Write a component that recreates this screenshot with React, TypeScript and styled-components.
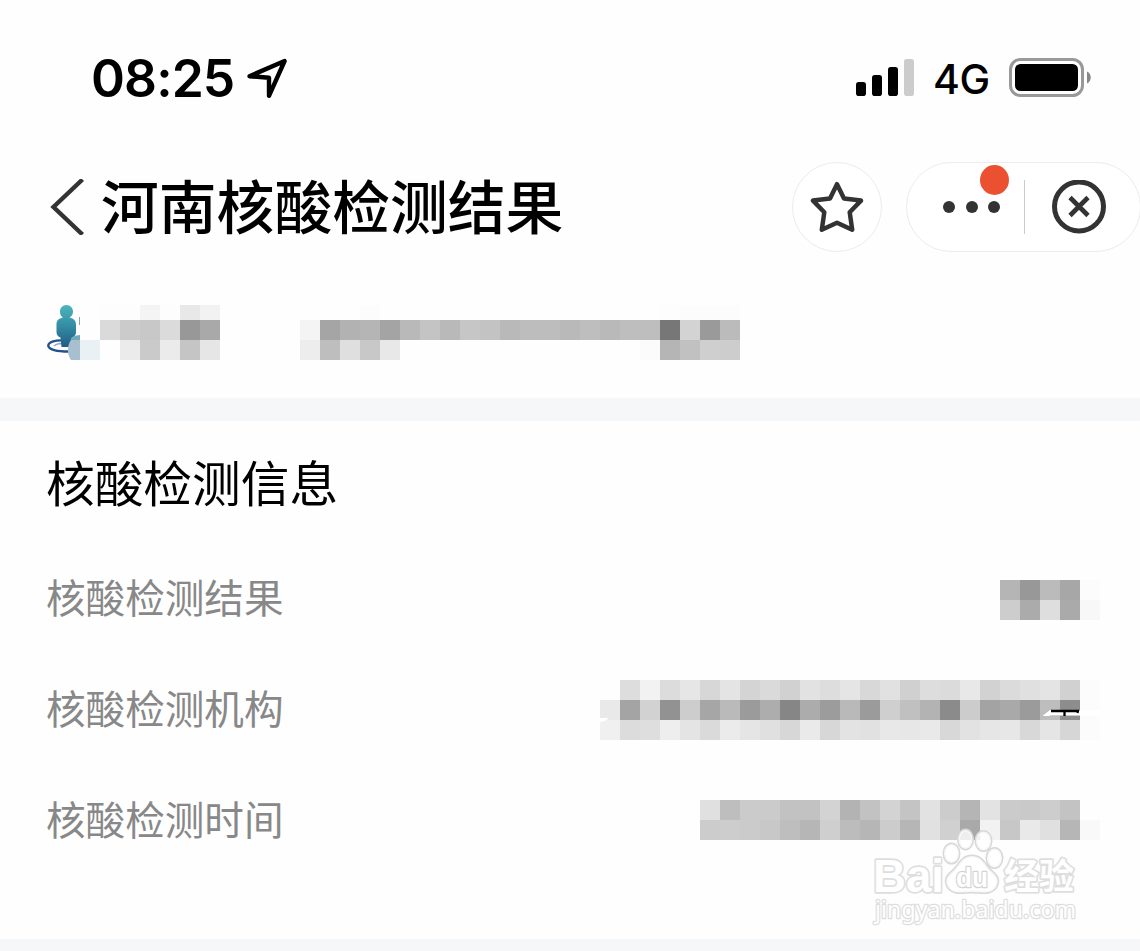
import React from 'react';
import styled, { createGlobalStyle } from 'styled-components';

const GlobalStyle = createGlobalStyle`
  * {
    box-sizing: border-box;
  }
  body {
    margin: 0;
    background: #fefefe;
    font-family: 'Noto Sans CJK SC', sans-serif;
    color: #000;
    overflow: hidden;
  }
`;

const StyledScreen = styled.main`
  position: relative;
  display: flex;
  flex-direction: column;
  width: 1140px;
  height: 951px;
  overflow: hidden;
`;

const StyledStatusBar = styled.header`
  display: flex;
  align-items: center;
  flex: 0 0 156px;
  padding: 0 49px 1px 91px;
  font-family: Inter, 'Liberation Sans', sans-serif;
`;

const StyledTime = styled.span`
  width: 156px;
  font-size: 51.5px;
  font-weight: 600;
  line-height: 60px;
  letter-spacing: -0.9px;
  white-space: nowrap;
`;

const StyledStatusIcons = styled.div`
  display: flex;
  align-items: center;
  margin-left: auto;
`;

const StyledNetwork = styled.span`
  width: 76px;
  margin-right: 18px;
  padding: 2px 0 0 18px;
  font-size: 41px;
  font-weight: 500;
  line-height: 50px;
  letter-spacing: -0.5px;
`;

const StyledNav = styled.nav`
  display: flex;
  align-items: center;
  flex: 0 0 102px;
  padding-left: 50px;
`;

const StyledTitle = styled.h1`
  margin: 0 0 0 16px;
  padding-bottom: 7px;
  font-size: 57.8px;
  font-weight: 500;
  line-height: 84px;
  white-space: nowrap;
`;

const StyledRoundButton = styled.button`
  display: flex;
  justify-content: center;
  align-items: center;
  width: 90px;
  height: 90px;
  margin-left: auto;
  padding: 0;
  border: 1px solid #ececec;
  border-radius: 50%;
  background: #fff;
`;

const StyledCapsule = styled.div`
  display: flex;
  align-items: center;
  width: 235px;
  height: 90px;
  margin: 0 -1px 0 24px;
  padding-left: 36px;
  border: 1px solid #ececec;
  border-radius: 45px;
  background: #fff;
`;

const StyledMore = styled.div`
  position: relative;
  display: flex;
  gap: 10.5px;
  width: 81px;
`;

const StyledDot = styled.i`
  width: 12px;
  height: 12px;
  border-radius: 50%;
  background: #333;
`;

const StyledBadge = styled.i`
  position: absolute;
  top: -36px;
  left: 37px;
  width: 29px;
  height: 30px;
  border-radius: 50%;
  background: #eb5131;
`;

const StyledSeparator = styled.i`
  width: 1px;
  height: 54px;
  margin-right: 27px;
  background: #ccc;
`;

const StyledPatient = styled.section`
  display: flex;
  align-items: flex-start;
  flex: 0 0 140px;
  padding: 47px 0 0 47px;
`;

const StyledPatientId = styled.div`
  margin-left: 80px;
`;

const StyledBand = styled.div`
  flex: 0 0 23px;
  background: #f6f7f9;
`;

const StyledSection = styled.section`
  flex: 0 0 518px;
  padding: 0 40px 0 46px;
`;

const StyledSectionTitle = styled.h2`
  margin: 0;
  padding-top: 24px;
  height: 123px;
  font-size: 48.7px;
  font-weight: 400;
  line-height: 72px;
`;

const StyledRow = styled.div`
  display: flex;
  justify-content: space-between;
  align-items: flex-start;
  height: 111px;
`;

const StyledLabel = styled.span`
  padding-top: 22px;
  color: #888;
  font-size: 39.6px;
  line-height: 59px;
`;

const StyledMosaic = styled.div<{ $columns: number; $first: number }>`
  display: grid;
  grid-template-columns: repeat(${({ $columns }) => $columns}, 20px);
  grid-template-rows: ${({ $first }) => $first}px;
  grid-auto-rows: 20px;
`;

const StyledCell = styled.i<{ $color: string }>`
  background: ${({ $color }) => $color};
`;

const StyledMasked = styled.div<{ $top: number }>`
  position: relative;
  margin-top: ${({ $top }) => $top}px;
`;

const StyledStroke = styled.svg`
  position: absolute;
  top: 28px;
  left: 0;
`;

const StyledWatermark = styled.svg`
  position: absolute;
  left: 860px;
  top: 820px;
`;

interface IMosaic {
  rows: string[];
  first?: number;
}

/**
 * Blocks of censored text, one hex grey level per cell.
 */
const Mosaic = ({ rows, first = 20 }: IMosaic) => {
  const cells = rows.map((r) => r.split(' '));
  return (
    <StyledMosaic $columns={cells[0].length} $first={first}>
      {cells.flat().map((c, i) => (
        <StyledCell key={i} $color={c.length === 2 ? `#${c}${c}${c}` : `#${c}`} />
      ))}
    </StyledMosaic>
  );
};

const nameRows = [
  'fe fd fd f4 fd e8 f2',
  'fe da cb c8 db 98 a9',
  'e9f1f4 fe eb ca eb c5 e6',
];

const idRows = [
  'fe fe fe fc fe fe fe fe fe fe fe fe fe fe fe fe fe fe fd fc fc fc',
  'f4 a5 b2 b5 a4 b9 c4 b9 c6 c3 b9 bd bd b9 be b9 be be 77 d3 9a bb',
  'ed be df c8 e8 fe fe fe fe fe fe fe fe fe fe fe fe fb b5 c1 cf cd',
];

const resultRows = ['b5 98 bb a7 fc', 'cd ab de aa f8'];

const organisationRows = [
  'fe dd f2 dc e6 d7 e4 d4 da d1 e2 dd e5 d8 e1 d0 dd db e8 d2 db e0 e4 d1 fc',
  'e9 a4 d2 92 cd a6 ba 9b ad 86 ac 9c b9 9b cf c0 b3 8b cc a3 a9 9b bd 8d fc',
  'f0 dc de ee e4 da eb e5 e0 d7 ea d7 e3 e1 e8 e7 e9 d8 e2 e6 e7 d8 e5 d6 fc',
];

const timeRows = [
  'e0 be cb cb c2 c2 d3 b3 c2 d3 c4 e2 cc b5 e3 cb c9 cd c3 fe',
  'cc cd cb c8 be b6 cf bc b6 cc b6 e1 d0 a9 f2 c7 e9 e0 b6 f9',
];

const LocationIcon = () => (
  <svg width="42" height="42" viewBox="0 0 42 42">
    <path
      d="M2.5 19.2 37.6 4 22 38.8V20.8Z"
      fill="none"
      stroke="#000"
      strokeWidth="4.4"
      strokeLinejoin="round"
    />
  </svg>
);

const SignalIcon = () => (
  <svg width="59" height="38" viewBox="0 0 59 38">
    <rect x="0" y="23" width="10" height="14" rx="2.8" />
    <rect x="16" y="16" width="10" height="21" rx="2.8" />
    <rect x="32" y="8" width="10" height="29" rx="2.8" />
    <rect x="48" y="0" width="10" height="37" rx="2.8" fill="#ccc" />
  </svg>
);

const BatteryIcon = () => (
  <svg width="82" height="40" viewBox="0 0 82 40">
    <rect
      x="1.5"
      y="1.5"
      width="72"
      height="36"
      rx="10"
      fill="#fff"
      stroke="#999"
      strokeWidth="3"
    />
    <rect x="6" y="6" width="63" height="27" rx="5.5" />
    <path d="M78 13.5c5 2 5 10 0 12Z" fill="#888" />
  </svg>
);

const BackIcon = () => (
  <svg width="35" height="56" viewBox="0 0 35 56">
    <path d="M32.500 .5 3.500 28 32.500 55.500" fill="none" stroke="#333" strokeWidth="4.4" />
  </svg>
);

const StarIcon = () => (
  <svg width="54" height="54" viewBox="0 0 54 54">
    <path
      d="M27 4.2 34 18.4 51 20.6 39.7 32.3 42.2 49.7 27 42.7 11.8 49.7 14.3 32.3 3 20.6 20 18.4Z"
      fill="none"
      stroke="#333"
      strokeWidth="4.5"
      strokeLinejoin="round"
    />
  </svg>
);

const CloseIcon = () => (
  <svg width="54" height="54" viewBox="0 0 54 54">
    <g fill="none" stroke="#333">
      <circle cx="27" cy="26.500" r="24.500" strokeWidth="5" />
      <path d="m18 17.500 18 18M36 17.500 18 35.500" strokeWidth="4.6" />
    </g>
  </svg>
);

const PersonIcon = () => (
  <svg width="33" height="55" viewBox="0 0 33 55">
    <defs>
      <linearGradient id="person" x1="0" y1="0" x2="0" y2="1">
        <stop offset="0" stopColor="#4db5bc" />
        <stop offset=".5" stopColor="#338da3" />
        <stop offset="1" stopColor="#225b86" />
      </linearGradient>
    </defs>
    <path
      d="M21 36C9 34 0 37 1.500 41.500c1.500 3.500 9 5 20 5"
      fill="none"
      stroke="#24518a"
      strokeWidth="2.4"
    />
    <path d="M7 41c3-3 7-3 15-2" fill="none" stroke="#8fa8c8" strokeWidth="1.5" />
    <path
      d="M19.500 0c4 0 6.500 3 6.500 6.500 0 3-1.500 5-3.500 6 4.500 1 6.500 3 6.500 7.500V27c0 3-1.500 4.500-4 5.500l-1 9.500h-9.500l-1-9.500C11 31.500 9.500 30 9.500 27v-7.500c0-4 2-6 6.500-7-2-1-3-3-3-6C13 3 15.500 0 19.500 0Z"
      fill="url(#person)"
    />
    <path d="M24 33q4-3 9-3v5h-9Z" fill="#73a8b9" />
    <path d="M33 35h-9q-3 4-3 10t3 10h9Z" fill="#a7bfcf" />
    <path d="M32.500 12v8" stroke="#7fa9b8" />
  </svg>
);

const Watermark = () => (
  <StyledWatermark width="230" height="115" viewBox="0 0 230 115">
    <g
      fill="#fff"
      stroke="#dedede"
      strokeWidth="3.4"
      paintOrder="stroke"
      strokeLinejoin="round"
    >
      <g fillOpacity=".8" strokeWidth="3" stroke="#d8d8d8">
        <ellipse cx="91.500" cy="33.500" rx="7.500" ry="9.500" />
        <ellipse cx="105.500" cy="19.500" rx="7" ry="9.500" />
        <ellipse cx="123.500" cy="21" rx="7.500" ry="9.500" />
        <ellipse cx="134.500" cy="38" rx="7.500" ry="9.500" />
        <path d="M112 36c10 0 13 9 18 14 7 6 10 10 6 17-5 8-15 5-24 5s-19 3-24-5c-4-7-1-11 6-17 5-5 8-14 18-14Z" />
      </g>
      <g fontFamily="'Liberation Sans', Arial, sans-serif" fontWeight="700">
        <text x="13" y="72" fontSize="47" textLength="71" lengthAdjust="spacingAndGlyphs">
          Bai
        </text>
        <text
          x="96"
          y="67"
          fontSize="28"
          stroke="#d4d4d4"
          strokeWidth="2.600"
          textLength="32"
          lengthAdjust="spacingAndGlyphs"
        >
          du
        </text>
      </g>
      <text
        x="144"
        y="69"
        fontSize="35"
        fontWeight="700"
        fontFamily="'Noto Sans CJK SC', sans-serif"
      >
        经验
      </text>
      <text
        x="15"
        y="98"
        fontSize="23"
        strokeWidth="2.600"
        fontFamily="'Noto Sans', sans-serif"
        textLength="201"
      >
        jingyan.baidu.com
      </text>
    </g>
  </StyledWatermark>
);

const App = () => (
  <>
    <GlobalStyle />
    <StyledScreen>
      <StyledStatusBar>
        <StyledTime>08:25</StyledTime>
        <LocationIcon />
        <StyledStatusIcons>
          <SignalIcon />
          <StyledNetwork>4G</StyledNetwork>
          <BatteryIcon />
        </StyledStatusIcons>
      </StyledStatusBar>
      <StyledNav>
        <BackIcon />
        <StyledTitle>河南核酸检测结果</StyledTitle>
        <StyledRoundButton>
          <StarIcon />
        </StyledRoundButton>
        <StyledCapsule>
          <StyledMore>
            <StyledDot />
            <StyledDot />
            <StyledDot />
            <StyledBadge />
          </StyledMore>
          <StyledSeparator />
          <CloseIcon />
        </StyledCapsule>
      </StyledNav>
      <StyledPatient>
        <PersonIcon />
        <Mosaic rows={nameRows} first={15} />
        <StyledPatientId>
          <Mosaic rows={idRows} first={15} />
        </StyledPatientId>
      </StyledPatient>
      <StyledBand />
      <StyledSection>
        <StyledSectionTitle>核酸检测信息</StyledSectionTitle>
        <StyledRow>
          <StyledLabel>核酸检测结果</StyledLabel>
          <StyledMasked $top={36}>
            <Mosaic rows={resultRows} />
          </StyledMasked>
        </StyledRow>
        <StyledRow>
          <StyledLabel>核酸检测机构</StyledLabel>
          <StyledMasked $top={25}>
            <Mosaic rows={organisationRows} />
            <StyledStroke width="500" height="14" viewBox="0 0 500 14">
              <path d="M0 10h9L5 13 0 14Z" fill="#fff" />
              <path d="M443 7.500 450 2h50v6h-57Z" fill="#fff" />
              <path d="M450 7.500h30" stroke="#ccc" />
              <path
                d="M451 3h27l-.5 2M464.500 3v5"
                fill="none"
                stroke="#000"
                strokeWidth="2.300"
              />
            </StyledStroke>
          </StyledMasked>
        </StyledRow>
        <StyledRow>
          <StyledLabel>核酸检测时间</StyledLabel>
          <StyledMasked $top={34}>
            <Mosaic rows={timeRows} />
          </StyledMasked>
        </StyledRow>
      </StyledSection>
      <StyledBand />
      <Watermark />
    </StyledScreen>
  </>
);

export default App;
